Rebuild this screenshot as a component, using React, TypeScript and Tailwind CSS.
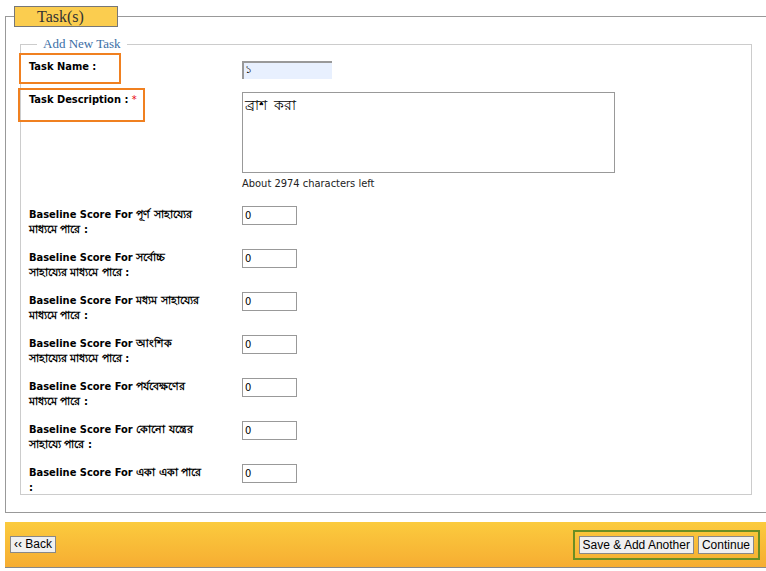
import React from "react";

const rows: [string, string][] = [
  ["Baseline Score For পূর্ণ সাহায্যের", "মাধ্যমে পারে :"],
  ["Baseline Score For সর্বোচ্চ", "সাহায্যের মাধ্যমে পারে :"],
  ["Baseline Score For মধ্যম সাহায্যের", "মাধ্যমে পারে :"],
  ["Baseline Score For আংশিক", "সাহায্যের মাধ্যমে পারে :"],
  ["Baseline Score For পর্যবেক্ষণের", "মাধ্যমে পারে :"],
  ["Baseline Score For কোনো যন্ত্রের", "সাহায্যে পারে :"],
  ["Baseline Score For একা একা পারে", ":"],
];

const font = { fontFamily: "'DejaVu Sans Condensed','DejaVu Sans','Noto Sans',sans-serif" };

export default function App() {
  return (
    <div className="relative w-[766px] h-[571px] bg-white overflow-hidden text-black" style={font}>
      <div className="pt-[16px] pl-[5px]">
        <div className="relative border border-[#999] border-r-0 h-[497px]">
          <div className="absolute left-[8px] top-[-11px] w-[104px] h-[21px] bg-[#fbcd4f] border border-[#777] text-[16px] leading-[19px] text-[#333] pl-[22px]" style={{ fontFamily: "'Liberation Serif',serif" }}>Task(s)</div>
          <div className="relative ml-[14px] mr-[14px] mt-[27px] border border-[#ccc] h-[451px] bg-white">
            <div className="absolute left-[16px] top-[-9px] bg-white px-[6px] text-[13px] leading-[16px] text-[#3a6ea5]" style={{ fontFamily: "'Liberation Serif',serif" }}>Add New Task</div>
            <div className="pl-[8px] pt-[16px] text-[11px]">
              <div className="flex h-[31px]">
                <div className="w-[213px] font-bold mt-[-2px]">Task Name :</div>
                <div className="w-[90px] h-[18px] bg-[#e8f0fe] border-t-2 border-l-2 border-[#999] text-[11px] leading-[14px] pl-[1px]">১</div>
              </div>
              <div className="flex">
                <div className="w-[213px] font-bold">Task Description : <span className="text-red-600 font-normal">*</span></div>
                <div>
                  <div className="w-[373px] h-[81px] border border-[#999] text-[14px] px-[2px] pt-[1px]" style={{ fontFamily: "'Noto Sans',sans-serif" }}>ব্রাশ &nbsp;করা</div>
                  <div className="mt-[4px] text-[11px] leading-[14px] text-[#222]">About 2974 characters left</div>
                </div>
              </div>
              <div className="mt-[15px] flex flex-col gap-[25px]">
                {rows.map((r, i) => (
                  <div key={i} className="flex h-[18px]">
                    <div className="w-[213px] font-bold leading-[15px] pt-[1px]">{r[0]}<br />{r[1]}</div>
                    <div className="w-[55px] h-[19px] border border-[#999] text-[11px] leading-[17px] pl-[2px]">0</div>
                  </div>
                ))}
              </div>
            </div>
          </div>
        </div>
      </div>
      <div className="mt-[9px] ml-[5px] h-[46px] bg-gradient-to-b from-[#fbcb3e] to-[#f6ad32] border-b border-[#888] flex items-center justify-between pl-[5px] pr-[6px] text-[12px]" style={{ fontFamily: "'Liberation Sans',sans-serif" }}>
        <div className="border border-[#888] bg-[#f0f0f0] px-[3px] h-[17px] leading-[15px]">‹‹ Back</div>
        <div className="flex gap-[4px] border-2 border-[#6b8e23] p-[4px] px-[4px]">
          <div className="border border-[#888] bg-[#f0f0f0] px-[3px] h-[18px] leading-[16px]">Save &amp; Add Another</div>
          <div className="border border-[#888] bg-[#f0f0f0] px-[3px] h-[18px] leading-[16px]">Continue</div>
        </div>
      </div>
      <div className="absolute left-[19px] top-[53px] w-[102px] h-[31px] border-2 border-[#f08020]" />
      <div className="absolute left-[18px] top-[88px] w-[127px] h-[34px] border-2 border-[#f08020]" />
    </div>
  );
}
